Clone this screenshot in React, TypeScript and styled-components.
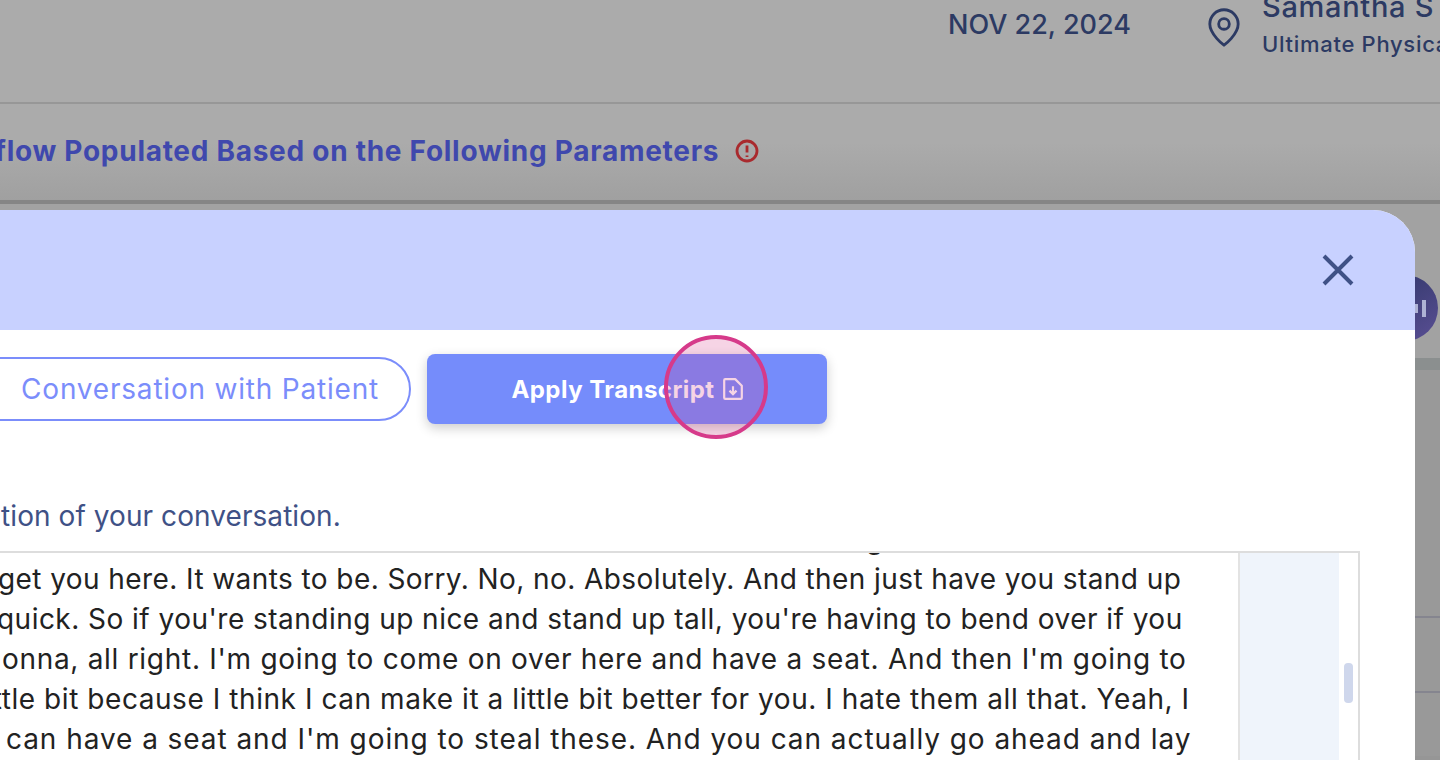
import { createGlobalStyle } from "styled-components"
import styled from "styled-components"

const GlobalStyle = createGlobalStyle`
  html, body {
    margin: 0;
    padding: 0;
    background: #aaaaaa;
    font-family: Inter, "Noto Sans", sans-serif;
  }
`

const lines = [
  { text: "get you here. It wants to be. Sorry. No, no. Absolutely. And then just have you stand up", shift: -2, spacing: 0.42 },
  { text: "quick. So if you're standing up nice and stand up tall, you're having to bend over if you", shift: -3, spacing: 0.47 },
  { text: "gonna, all right. I'm going to come on over here and have a seat. And then I'm going to", shift: -16, spacing: 0.71 },
  { text: "little bit because I think I can make it a little bit better for you. I hate them all that. Yeah, I", shift: -22, spacing: 0.56 },
  { text: "can have a seat and I'm going to steal these. And you can actually go ahead and lay", shift: 6, spacing: 0.94 },
]

export default function App() {
  return (
    <>
      <GlobalStyle />
      <Page>
        <TopBar>
          <DateText>NOV 22, 2024</DateText>
          <PinIcon viewBox="3 1 18 22" fill="none" stroke="#2c3a63" strokeWidth="1.6">
            <path d="M20 10c0 6-8 12-8 12s-8-6-8-12a8 8 0 0 1 16 0Z" strokeLinejoin="round" />
            <circle cx="12" cy="10" r="3" />
          </PinIcon>
          <UserBlock>
            <UserName>Samantha S</UserName>
            <UserClinic>Ultimate Physical Therapy</UserClinic>
          </UserBlock>
        </TopBar>
        <TitleBar>
          <TitleText>Workflow Populated Based on the Following Parameters</TitleText>
          <AlertIcon viewBox="0 0 24 24" fill="none" stroke="#a92a2e" strokeWidth="2.8">
            <circle cx="12" cy="12" r="10" />
            <path d="M12 6.5v7M12 16.5v1.4" />
          </AlertIcon>
        </TitleBar>
        <Body>
          <Modal>
            <ModalHeader>
              <CloseIcon viewBox="0 0 32 32" fill="none" stroke="#3f5186" strokeWidth="4">
                <path d="M2 2l28 28M30 2L2 30" />
              </CloseIcon>
            </ModalHeader>
            <ModalBody>
              <Actions>
                <PillTab>Conversation with Patient</PillTab>
                <ApplyButton>
                  Apply Transcript
                  <FileIcon viewBox="3 2 18 20" fill="none" stroke="currentColor" strokeWidth="2">
                    <path d="M14 3H5a1 1 0 0 0-1 1v16a1 1 0 0 0 1 1h14a1 1 0 0 0 1-1V9z" strokeLinejoin="round" />
                    <path d="M12 9.5v7M8.8 13.5l3.2 3.2 3.2-3.2" />
                  </FileIcon>
                </ApplyButton>
              </Actions>
              <Helper>ction of your conversation.</Helper>
              <TranscriptBox>
                <TranscriptText>
                  <ClippedLine>g</ClippedLine>
                  {lines.map((line) => (
                    <Line key={line.text} $shift={line.shift} $spacing={line.spacing}>
                      {line.text}
                    </Line>
                  ))}
                </TranscriptText>
                <SideColumn />
                <ScrollTrack>
                  <ScrollThumb />
                </ScrollTrack>
              </TranscriptBox>
            </ModalBody>
          </Modal>
          <Rail>
            <RoundBadge>
              <BarsIcon viewBox="0 0 11 17" fill="#aeb2d4">
                <rect x="0" y="4" width="3" height="9" />
                <rect x="7" y="0" width="4" height="17" />
              </BarsIcon>
            </RoundBadge>
            <RailStrip />
            <RailLower>
              <RailRow $height={248} />
              <RailRow $height={75} />
            </RailLower>
          </Rail>
        </Body>
        <Highlight />
      </Page>
    </>
  )
}

const Page = styled.div`
  position: relative;
  width: 1440px;
  height: 760px;
  overflow: hidden;
  background: #969696;
`

const TopBar = styled.div`
  display: flex;
  align-items: flex-start;
  height: 102px;
  padding-left: 948px;
  background: #ababab;
  border-bottom: 2px solid #979797;
  white-space: nowrap;
`

const DateText = styled.div`
  flex: none;
  margin-top: 8px;
  width: 260px;
  font-size: 27px;
  line-height: 34px;
  font-weight: 500;
  color: #2c3a63;
`

const PinIcon = styled.svg`
  flex: none;
  width: 32px;
  height: 39px;
  margin: 8px 22px 0 0;
`

const UserBlock = styled.div`
  flex: none;
  margin-top: -9px;
  color: #2c3a63;
`

const UserName = styled.div`
  font-size: 29px;
  line-height: 32px;
  font-weight: 500;
  letter-spacing: 0.7px;
`

const UserClinic = styled.div`
  font-size: 22px;
  line-height: 30px;
  font-weight: 500;
  letter-spacing: 0.7px;
  margin-top: 6px;
`

const TitleBar = styled.div`
  display: flex;
  align-items: center;
  gap: 16px;
  height: 96px;
  margin-left: -81px;
  padding-bottom: 2px;
  box-sizing: border-box;
  background: linear-gradient(#ababab 40%, #a0a0a0);
  white-space: nowrap;
`

const TitleText = styled.div`
  font-size: 28px;
  font-weight: 700;
  letter-spacing: 0.72px;
  color: #3f48ad;
`

const AlertIcon = styled.svg`
  flex: none;
  width: 24px;
  height: 24px;
`

const Body = styled.div`
  display: flex;
  border-top: 4px solid #858585;
  padding-top: 6px;
  height: 556px;
  box-sizing: border-box;
  background: #a2a2a2;
`

const Modal = styled.div`
  position: relative;
  z-index: 1;
  flex: none;
  width: 1415px;
  height: 560px;
  overflow: hidden;
  background: #ffffff;
  border-top-right-radius: 42px;
`

const ModalHeader = styled.div`
  display: flex;
  align-items: center;
  justify-content: flex-end;
  height: 120px;
  padding-right: 61px;
  background: #c8d1ff;
`

const CloseIcon = styled.svg`
  width: 32px;
  height: 32px;
`

const ModalBody = styled.div`
  white-space: nowrap;
`

const Actions = styled.div`
  display: flex;
  align-items: center;
  gap: 16px;
  padding-top: 24px;
`

const PillTab = styled.div`
  flex: none;
  width: 441px;
  height: 64px;
  margin-left: -30px;
  box-sizing: border-box;
  display: flex;
  align-items: center;
  justify-content: flex-end;
  padding-right: 30px;
  border: 2px solid #7b8dfb;
  border-radius: 32px;
  font-size: 28px;
  letter-spacing: 0.8px;
  color: #7b8dfb;
`

const ApplyButton = styled.div`
  flex: none;
  display: flex;
  align-items: center;
  justify-content: center;
  gap: 8px;
  width: 400px;
  height: 70px;
  border-radius: 8px;
  background: #758cfb;
  box-shadow: 0 4px 12px rgba(0, 0, 0, 0.2);
  font-size: 24px;
  font-weight: 700;
  letter-spacing: 0.45px;
  color: #ffffff;
`

const FileIcon = styled.svg`
  width: 20px;
  height: 22px;
`

const Helper = styled.div`
  margin: 74px 0 0 -15px;
  font-size: 28px;
  line-height: 36px;
  letter-spacing: 0.07px;
  color: #3f5186;
`

const TranscriptBox = styled.div`
  display: flex;
  width: 1360px;
  height: 300px;
  margin-top: 17px;
  box-sizing: border-box;
  border-top: 2px solid #dddddd;
  border-right: 2px solid #dddddd;
`

const TranscriptText = styled.div`
  flex: none;
  width: 1238px;
  overflow: hidden;
  font-size: 28px;
  line-height: 40px;
  letter-spacing: 0.35px;
  color: #222222;
`

const ClippedLine = styled.div`
  height: 40px;
  margin-top: -34px;
  padding-left: 866px;
`

const Line = styled.div<{ $shift: number; $spacing: number }>`
  margin-left: ${(p) => p.$shift}px;
  letter-spacing: ${(p) => p.$spacing}px;
`

const SideColumn = styled.div`
  flex: none;
  width: 99px;
  border-left: 2px solid #e3e3e3;
  background: #eff4fb;
`

const ScrollTrack = styled.div`
  flex: 1;
  padding: 110px 5px 0;
`

const ScrollThumb = styled.div`
  height: 40px;
  border-radius: 4px;
  background: #cfd7ec;
`

const Rail = styled.div`
  flex: 1;
  margin-top: -6px;
  display: flex;
  flex-direction: column;
  min-width: 0;
`

const RoundBadge = styled.div`
  flex: none;
  display: flex;
  align-items: center;
  justify-content: flex-end;
  width: 66px;
  height: 66px;
  margin: 71px 0 0 -43px;
  padding-right: 12px;
  box-sizing: border-box;
  border-radius: 50%;
  background: linear-gradient(145deg, #2d3566, #5a4f94);
`

const BarsIcon = styled.svg`
  width: 11px;
  height: 17px;
`

const RailStrip = styled.div`
  flex: none;
  height: 12px;
  margin-top: 17px;
  background: #8b8f8f;
`

const RailLower = styled.div`
  flex: 1;
  background: #999999;
`

const RailRow = styled.div<{ $height: number }>`
  height: ${(p) => p.$height}px;
  box-sizing: border-box;
  border-bottom: 2px solid #85858f;
`

const Highlight = styled.div`
  position: absolute;
  z-index: 2;
  left: 664px;
  top: 335px;
  width: 104px;
  height: 104px;
  box-sizing: border-box;
  border: 4px solid #d63a8a;
  border-radius: 50%;
  background: rgba(214, 58, 138, 0.22);
`
